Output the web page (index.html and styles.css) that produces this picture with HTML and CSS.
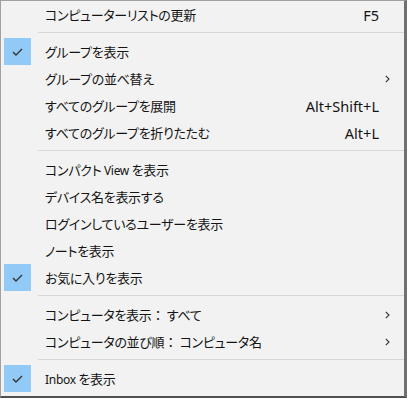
FILE: index.html
```html
<!DOCTYPE html>
<html lang="ja">
<head>
<meta charset="UTF-8" />
<title>Menu</title>
<link rel="stylesheet" href="styles.css">
</head>
<body>

<div class="menu">
  <div class="item">
    <span class="check"></span>
    <span class="label">コンピューターリストの更新</span>
    <span class="key">F5</span>
    <span class="sub"></span>
  </div>
  <div class="sep"></div>
  <div class="item on">
    <span class="check"><svg width="11" height="8" viewBox="0 0 11 8"><path d="M1 4 L4 7 L10 1" fill="none" stroke="#333" stroke-width="1.4"/></svg></span>
    <span class="label">グループを表示</span>
    <span class="key"></span>
    <span class="sub"></span>
  </div>
  <div class="item">
    <span class="check"></span>
    <span class="label">グループの並べ替え</span>
    <span class="key"></span>
    <span class="sub"><svg width="5" height="8" viewBox="0 0 5 8"><path d="M0.8 0.8 L4 4 L0.8 7.2" fill="none" stroke="#333" stroke-width="1.1"/></svg></span>
  </div>
  <div class="item">
    <span class="check"></span>
    <span class="label">すべてのグループを展開</span>
    <span class="key">Alt+Shift+L</span>
    <span class="sub"></span>
  </div>
  <div class="item">
    <span class="check"></span>
    <span class="label">すべてのグループを折りたたむ</span>
    <span class="key">Alt+L</span>
    <span class="sub"></span>
  </div>
  <div class="sep"></div>
  <div class="item">
    <span class="check"></span>
    <span class="label">コンパクト <span class="en">View</span> を表示</span>
    <span class="key"></span>
    <span class="sub"></span>
  </div>
  <div class="item">
    <span class="check"></span>
    <span class="label">デバイス名を表示する</span>
    <span class="key"></span>
    <span class="sub"></span>
  </div>
  <div class="item">
    <span class="check"></span>
    <span class="label">ログインしているユーザーを表示</span>
    <span class="key"></span>
    <span class="sub"></span>
  </div>
  <div class="item">
    <span class="check"></span>
    <span class="label">ノートを表示</span>
    <span class="key"></span>
    <span class="sub"></span>
  </div>
  <div class="item on">
    <span class="check"><svg width="11" height="8" viewBox="0 0 11 8"><path d="M1 4 L4 7 L10 1" fill="none" stroke="#333" stroke-width="1.4"/></svg></span>
    <span class="label">お気に入りを表示</span>
    <span class="key"></span>
    <span class="sub"></span>
  </div>
  <div class="sep"></div>
  <div class="item">
    <span class="check"></span>
    <span class="label">コンピュータを表示<span class="colon">：</span> すべて</span>
    <span class="key"></span>
    <span class="sub"><svg width="5" height="8" viewBox="0 0 5 8"><path d="M0.8 0.8 L4 4 L0.8 7.2" fill="none" stroke="#333" stroke-width="1.1"/></svg></span>
  </div>
  <div class="item">
    <span class="check"></span>
    <span class="label">コンピュータの並び順<span class="colon">：</span> コンピュータ名</span>
    <span class="key"></span>
    <span class="sub"><svg width="5" height="8" viewBox="0 0 5 8"><path d="M0.8 0.8 L4 4 L0.8 7.2" fill="none" stroke="#333" stroke-width="1.1"/></svg></span>
  </div>
  <div class="sep"></div>
  <div class="item on">
    <span class="check"><svg width="11" height="8" viewBox="0 0 11 8"><path d="M1 4 L4 7 L10 1" fill="none" stroke="#333" stroke-width="1.4"/></svg></span>
    <span class="label"><span class="en">Inbox</span> を表示</span>
    <span class="key"></span>
    <span class="sub"></span>
  </div>
</div>

</body>
</html>
```

FILE: styles.css
```css
body {
  margin: 0;
  background: #ffffff;
  font-family: "Noto Sans", "Noto Sans CJK JP", sans-serif;
  font-size: 12px;
  color: #141414;
}

.menu {
  width: 407px;
  height: 398px;
  box-sizing: border-box;
  background: #f2f2f2;
  border: 1px solid #a0a0a0;
  border-right: 3px solid #707070;
  border-bottom: 2px solid #505050;
  overflow: hidden;
}

.item {
  display: grid;
  grid-template-columns: 44px 1fr auto 25px;
  align-items: center;
  height: 27px;
}

.check {
  display: flex;
  align-items: center;
  justify-content: center;
  width: 27px;
  height: 27px;
  margin-left: 3px;
}

.item.on .check {
  background: #91c9f7;
}

.label {
  font-family: "Noto Sans CJK JP", sans-serif;
  font-size: 13px;
  font-feature-settings: "palt";
  letter-spacing: -0.3px;
  white-space: nowrap;
}

.label .en {
  font-family: "Noto Sans", sans-serif;
  font-size: 12px;
}

.label .colon {
  font-feature-settings: normal;
}

.key {
  font-size: 14.5px;
  text-align: right;
}

.sub {
  display: flex;
  justify-content: flex-end;
  padding-right: 14px;
}

.sep {
  height: 1px;
  background: #d7d7d7;
  margin: 4px 0 5px 37px;
}
```
